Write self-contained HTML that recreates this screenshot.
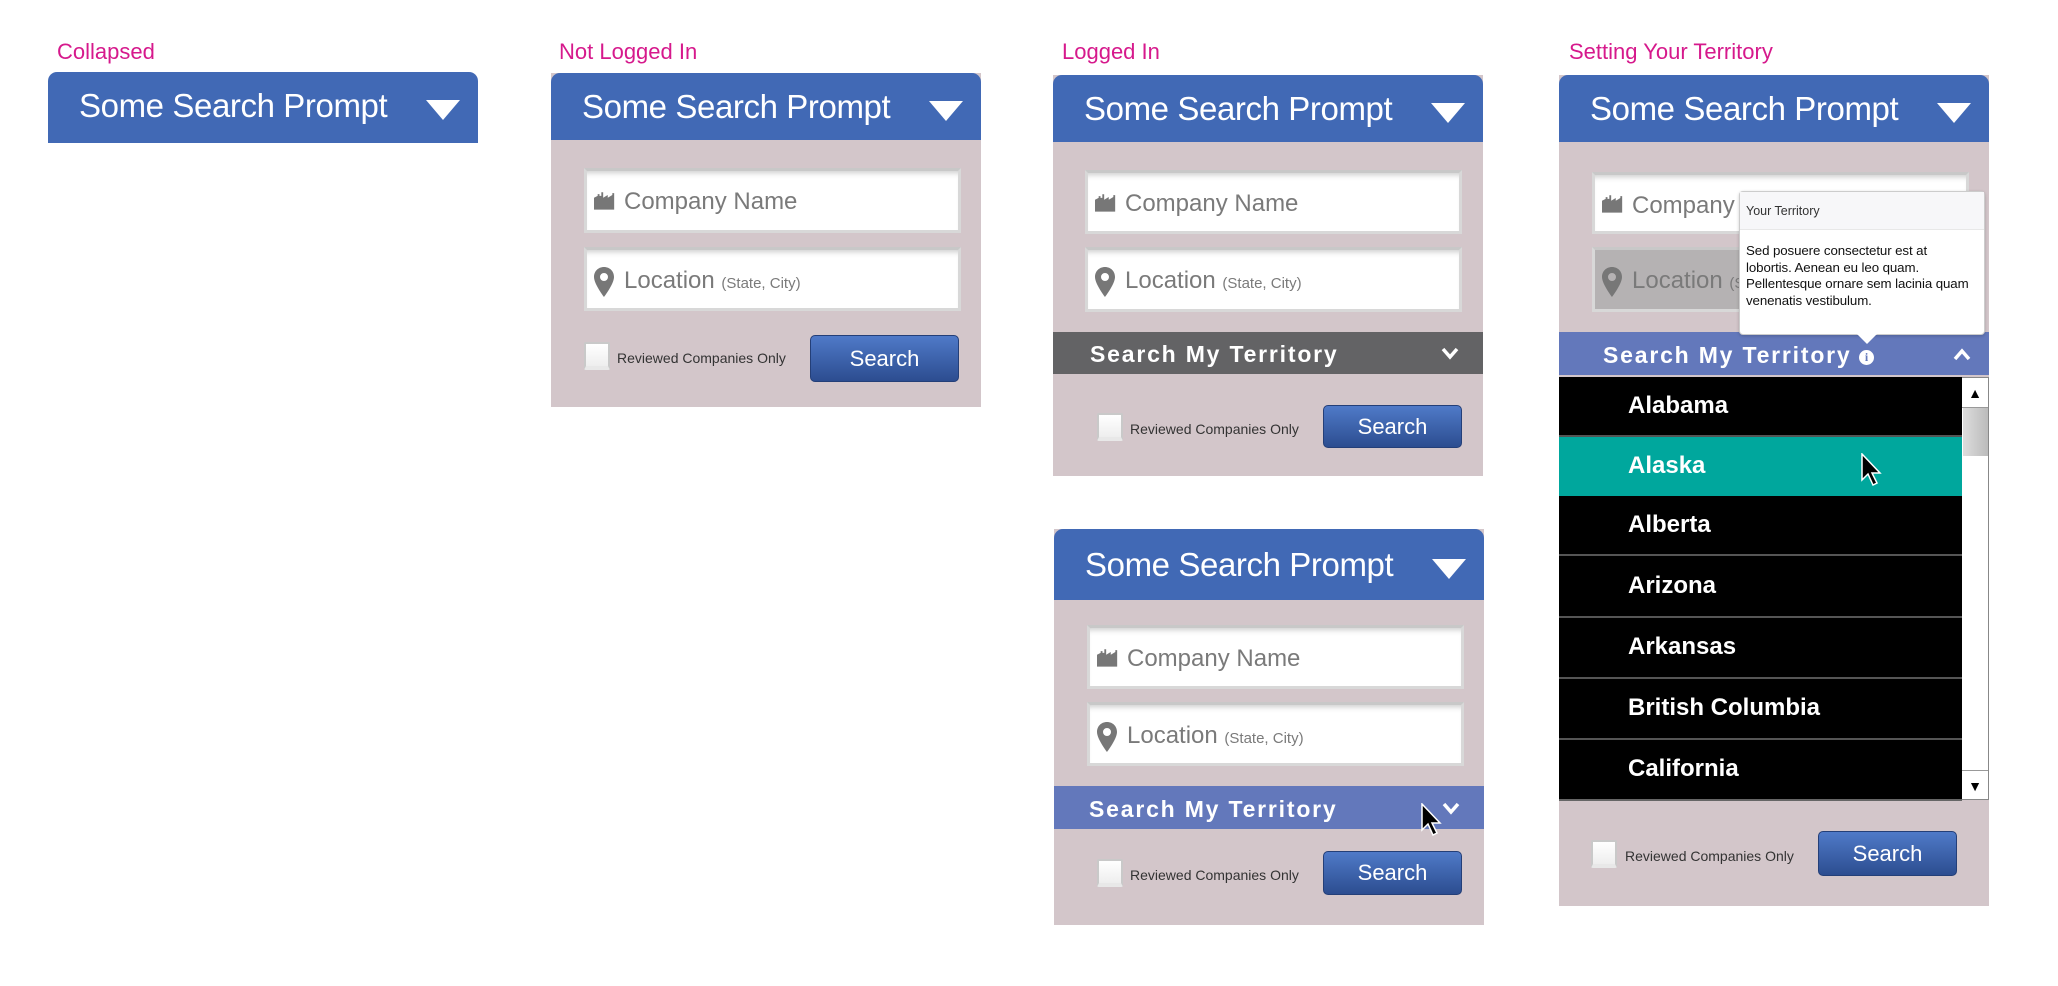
<!DOCTYPE html>
<html><head><meta charset="utf-8"><style>
*{box-sizing:border-box;margin:0;padding:0}
body{width:2058px;height:986px;background:#fff;position:relative;overflow:hidden;font-family:"Liberation Sans",Arial,sans-serif}
.a{position:absolute}
.lbl{color:#d6198c;font-size:22px;top:39px}
.hd{background:#4169b5;border-radius:9px 9px 0 0;color:#fff;font-size:33px;padding-left:31px;line-height:67px;letter-spacing:-0.4px}
.tri{position:absolute;right:18px;top:28px;width:0;height:0;border-left:17px solid transparent;border-right:17px solid transparent;border-top:20px solid #fff}
.body{background:#d3c6ca}
.inp{background:#fff;border:3px solid #d8d8d8;border-top-color:#c8c8c8;box-shadow:inset 0 6px 6px -4px #ccc;color:#7a7a7a;font-size:24px}
.inp span.t{position:absolute;left:37px;top:17px}
.inp small{font-size:15px}
.cb{width:26px;height:28px;background:linear-gradient(#fff,#eee);border:2px solid #c9c9c9;border-bottom:4px solid #e8e8e8;border-radius:2px}
.cbl{font-size:14px;color:#333}
.btn{background:linear-gradient(#4f7ac8,#2c4d90);border:1px solid #243f78;border-radius:5px;color:#fff;font-size:22px;text-align:center}
.ter{color:#fff;font-weight:bold;font-size:23px;letter-spacing:1.8px}
.row{width:403px;height:59px;background:#000;border-bottom:2px solid #555;color:#fff;font-weight:bold;font-size:24px;padding-left:69px;line-height:57px}
</style></head><body>

<div class="a lbl" style="left:57px">Collapsed</div>
<div class="a lbl" style="left:559px">Not Logged In</div>
<div class="a lbl" style="left:1062px">Logged In</div>
<div class="a lbl" style="left:1569px">Setting Your Territory</div>

<!-- P1 -->
<div class="a hd" style="left:48px;top:72px;width:430px;height:71px">Some Search Prompt<div class="tri"></div></div>

<!-- P2 -->
<div class="a body" style="left:551px;top:73px;width:430px;height:334px"></div>
<div class="a hd" style="left:551px;top:73px;width:430px;height:67px">Some Search Prompt<div class="tri"></div></div>
<div class="a inp" style="left:584px;top:168px;width:377px;height:65px">
<svg class="a" style="left:7px;top:20px" width="22" height="19" viewBox="0 0 24 20"><path d="M0 20V7l4-2V3h2v2h2V1h2v6l5-3v3l5-3V2h2v18z" fill="#777"/></svg>
<span class="t">Company Name</span></div>
<div class="a inp" style="left:584px;top:247px;width:377px;height:64px">
<svg class="a" style="left:7px;top:17px" width="20" height="30" viewBox="0 0 20 30"><path d="M10 0C4 0 0 4.5 0 10c0 7 10 20 10 20s10-13 10-20C20 4.5 16 0 10 0zm0 6a4 4 0 110 8 4 4 0 010-8z" fill="#777"/></svg>
<span class="t">Location <small>(State, City)</small></span></div>
<div class="a cb" style="left:584px;top:342px"></div>
<div class="a cbl" style="left:617px;top:350px">Reviewed Companies Only</div>
<div class="a btn" style="left:810px;top:335px;width:149px;height:47px;line-height:45px">Search</div>

<!-- P3 -->
<div class="a body" style="left:1053px;top:75px;width:430px;height:401px"></div>
<div class="a hd" style="left:1053px;top:75px;width:430px;height:67px">Some Search Prompt<div class="tri"></div></div>
<div class="a inp" style="left:1085px;top:170px;width:377px;height:64px">
<svg class="a" style="left:7px;top:20px" width="22" height="19" viewBox="0 0 24 20"><path d="M0 20V7l4-2V3h2v2h2V1h2v6l5-3v3l5-3V2h2v18z" fill="#777"/></svg>
<span class="t">Company Name</span></div>
<div class="a inp" style="left:1085px;top:247px;width:377px;height:65px">
<svg class="a" style="left:7px;top:17px" width="20" height="30" viewBox="0 0 20 30"><path d="M10 0C4 0 0 4.5 0 10c0 7 10 20 10 20s10-13 10-20C20 4.5 16 0 10 0zm0 6a4 4 0 110 8 4 4 0 010-8z" fill="#777"/></svg>
<span class="t">Location <small>(State, City)</small></span></div>
<div class="a" style="left:1053px;top:332px;width:430px;height:42px;background:#636365"></div>
<div class="a ter" style="left:1090px;top:341px">Search My Territory</div>
<svg class="a" style="left:1441px;top:346px" width="18" height="14" viewBox="0 0 18 14"><path d="M2 3l7 8 7-8" stroke="#fff" stroke-width="3.5" fill="none"/></svg>
<div class="a cb" style="left:1097px;top:413px"></div>
<div class="a cbl" style="left:1130px;top:421px">Reviewed Companies Only</div>
<div class="a btn" style="left:1323px;top:405px;width:139px;height:43px;line-height:41px">Search</div>

<!-- P4 -->
<div class="a body" style="left:1054px;top:529px;width:430px;height:396px"></div>
<div class="a hd" style="left:1054px;top:529px;width:430px;height:71px;line-height:71px">Some Search Prompt<div class="tri" style="top:30px"></div></div>
<div class="a inp" style="left:1087px;top:625px;width:377px;height:64px">
<svg class="a" style="left:7px;top:20px" width="22" height="19" viewBox="0 0 24 20"><path d="M0 20V7l4-2V3h2v2h2V1h2v6l5-3v3l5-3V2h2v18z" fill="#777"/></svg>
<span class="t">Company Name</span></div>
<div class="a inp" style="left:1087px;top:702px;width:377px;height:64px">
<svg class="a" style="left:7px;top:17px" width="20" height="30" viewBox="0 0 20 30"><path d="M10 0C4 0 0 4.5 0 10c0 7 10 20 10 20s10-13 10-20C20 4.5 16 0 10 0zm0 6a4 4 0 110 8 4 4 0 010-8z" fill="#777"/></svg>
<span class="t">Location <small>(State, City)</small></span></div>
<div class="a" style="left:1054px;top:786px;width:430px;height:43px;background:#6378bb"></div>
<div class="a ter" style="left:1089px;top:796px">Search My Territory</div>
<svg class="a" style="left:1442px;top:801px" width="18" height="14" viewBox="0 0 18 14"><path d="M2 3l7 8 7-8" stroke="#fff" stroke-width="3.5" fill="none"/></svg>
<svg class="a" style="left:1420px;top:803px" width="22" height="34" viewBox="0 0 22 34"><path d="M2 1v26l6-6 5 11 4-2-5-10h8z" fill="#000" stroke="#fff" stroke-width="1.5"/></svg>
<div class="a cb" style="left:1097px;top:859px"></div>
<div class="a cbl" style="left:1130px;top:867px">Reviewed Companies Only</div>
<div class="a btn" style="left:1323px;top:851px;width:139px;height:44px;line-height:42px">Search</div>

<!-- P5 -->
<div class="a body" style="left:1559px;top:75px;width:430px;height:831px"></div>
<div class="a hd" style="left:1559px;top:75px;width:430px;height:67px">Some Search Prompt<div class="tri"></div></div>
<div class="a inp" style="left:1592px;top:172px;width:377px;height:62px">
<svg class="a" style="left:7px;top:19px" width="22" height="19" viewBox="0 0 24 20"><path d="M0 20V7l4-2V3h2v2h2V1h2v6l5-3v3l5-3V2h2v18z" fill="#777"/></svg>
<span class="t">Company Name</span></div>
<div class="a inp" style="left:1592px;top:247px;width:377px;height:65px;background:#b5b2b3;box-shadow:none">
<svg class="a" style="left:7px;top:17px" width="20" height="30" viewBox="0 0 20 30"><path d="M10 0C4 0 0 4.5 0 10c0 7 10 20 10 20s10-13 10-20C20 4.5 16 0 10 0zm0 6a4 4 0 110 8 4 4 0 010-8z" fill="#777"/></svg>
<span class="t">Location <small>(State, City)</small></span></div>
<div class="a" style="left:1559px;top:332px;width:430px;height:43px;background:#6378bb"></div>
<div class="a ter" style="left:1603px;top:342px">Search My Territory</div>
<div class="a" style="left:1859px;top:350px;width:15px;height:15px;border-radius:50%;background:#fff;color:#6378bb;font-size:12px;font-weight:bold;text-align:center;line-height:15px;font-family:'Liberation Serif',serif">i</div>
<svg class="a" style="left:1953px;top:348px" width="18" height="14" viewBox="0 0 18 14"><path d="M2 11l7-8 7 8" stroke="#fff" stroke-width="3.5" fill="none"/></svg>

<!-- tooltip -->
<div class="a" style="left:1739px;top:191px;width:246px;height:144px;background:#fff;border:1px solid #ccc;border-radius:4px;box-shadow:0 1px 3px rgba(0,0,0,.2)">
<div style="height:38px;background:#f7f7f9;border-bottom:1px solid #e8e8e8;font-size:12.5px;color:#333;padding:12px 0 0 6px">Your Territory</div>
<div style="font-size:13.3px;line-height:16.5px;color:#111;padding:13px 0 0 6px;white-space:nowrap;letter-spacing:-0.1px">Sed posuere consectetur est at<br>lobortis. Aenean eu leo quam.<br>Pellentesque ornare sem lacinia quam<br>venenatis vestibulum.</div>
</div>
<div class="a" style="left:1857px;top:334px;width:0;height:0;border-left:10px solid transparent;border-right:10px solid transparent;border-top:10px solid #fff"></div>

<!-- list -->
<div class="a" style="left:1559px;top:377px;width:430px;height:423px;background:#fff;border:1px solid #888"></div>
<div class="a row" style="left:1559px;top:377px;height:60px">Alabama</div>
<div class="a row" style="left:1559px;top:437px;background:#00a79d;border-bottom:none">Alaska</div>
<svg class="a" style="left:1860px;top:453px" width="22" height="34" viewBox="0 0 22 34"><path d="M2 1v26l6-6 5 11 4-2-5-10h8z" fill="#000" stroke="#fff" stroke-width="1.5"/></svg>
<div class="a row" style="left:1559px;top:496px;height:60px">Alberta</div>
<div class="a row" style="left:1559px;top:556px;height:62px;line-height:60px">Arizona</div>
<div class="a row" style="left:1559px;top:618px;height:61px">Arkansas</div>
<div class="a row" style="left:1559px;top:679px;height:61px">British Columbia</div>
<div class="a row" style="left:1559px;top:740px;height:61px;border-bottom:2px solid #666">California</div>
<div class="a" style="left:1962px;top:378px;width:26px;height:30px;border-bottom:1px solid #999;text-align:center;font-size:14px;line-height:30px">▲</div>
<div class="a" style="left:1963px;top:408px;width:25px;height:48px;background:linear-gradient(90deg,#ddd,#bbb)"></div>
<div class="a" style="left:1962px;top:770px;width:26px;height:30px;border-top:1px solid #999;text-align:center;font-size:14px;line-height:30px">▼</div>

<div class="a cb" style="left:1591px;top:840px"></div>
<div class="a cbl" style="left:1625px;top:848px">Reviewed Companies Only</div>
<div class="a btn" style="left:1818px;top:831px;width:139px;height:45px;line-height:43px">Search</div>

</body></html>
